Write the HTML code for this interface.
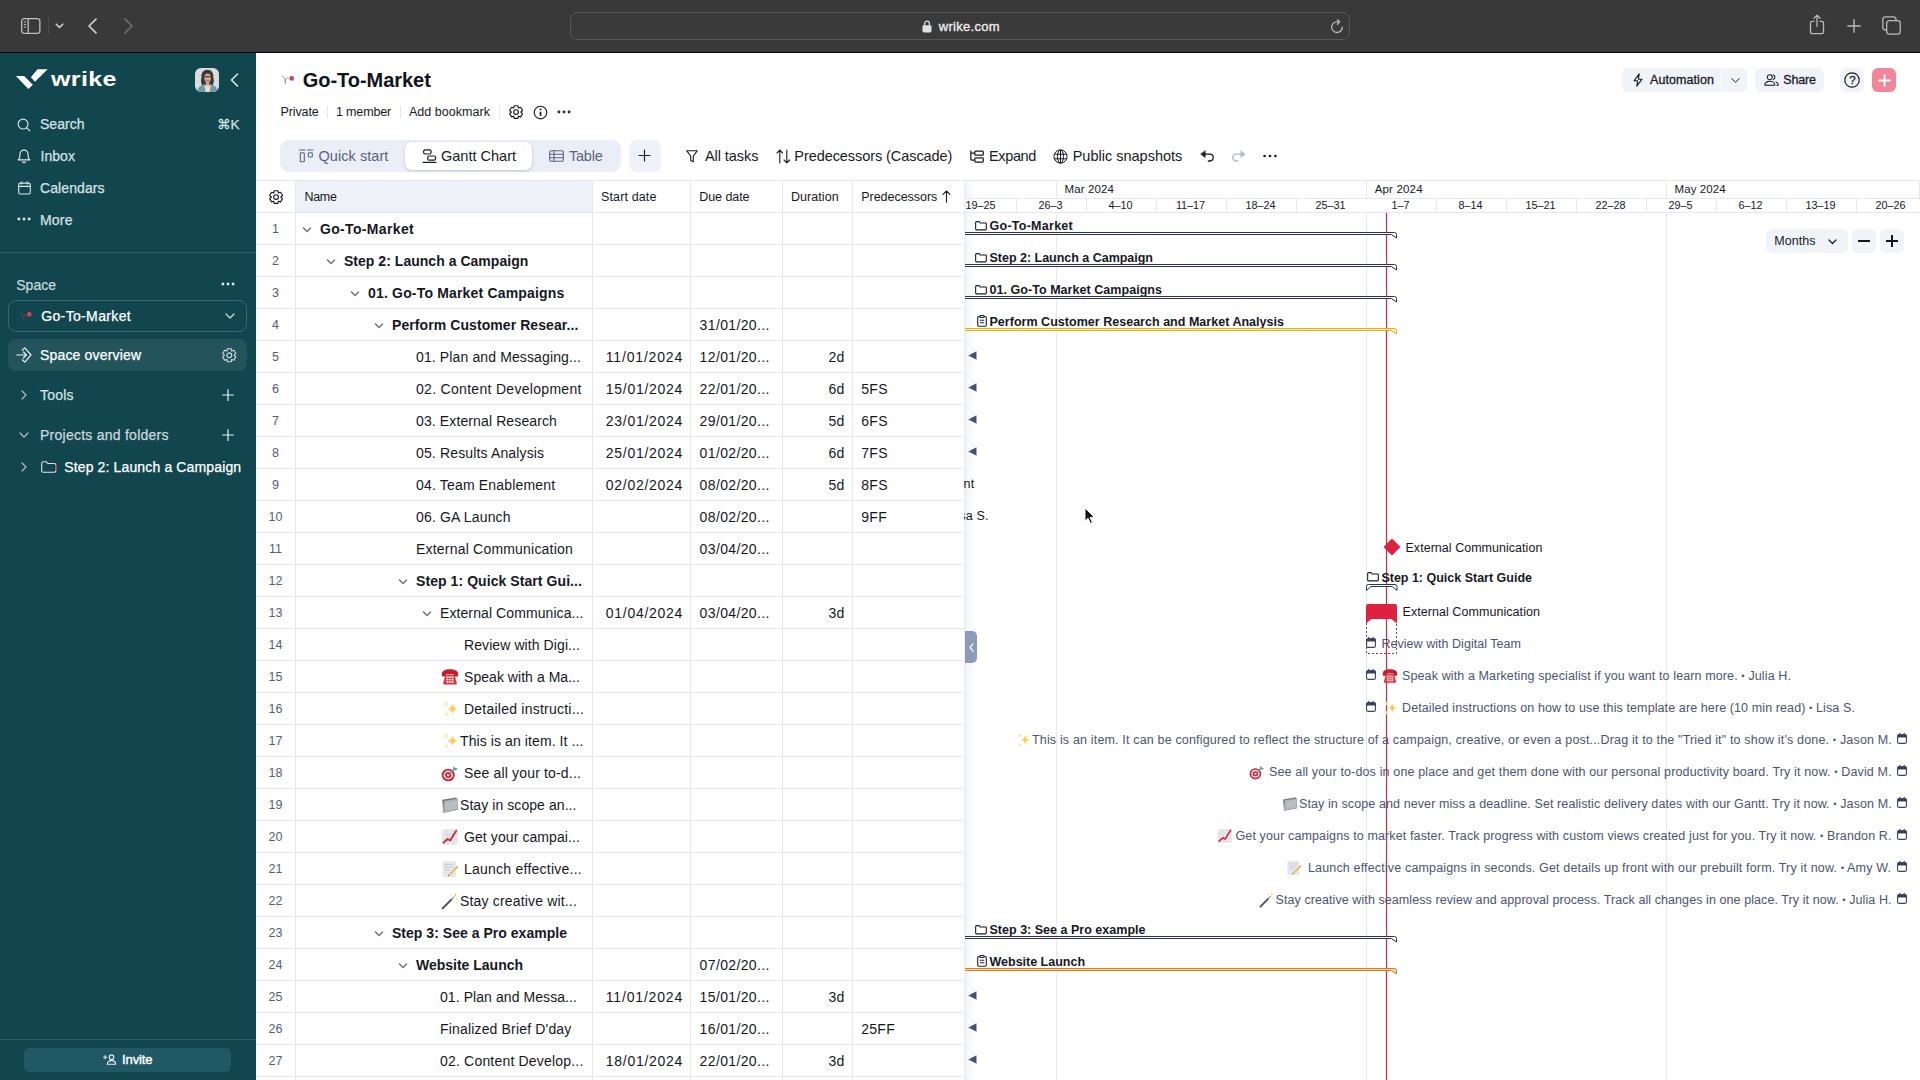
<!DOCTYPE html>
<html lang="en"><head><meta charset="utf-8"><title>Go-To-Market - Wrike</title>
<style>
*{box-sizing:border-box;margin:0;padding:0}
html,body{width:1920px;height:1080px;overflow:hidden;background:#fff}
body{font-family:"Liberation Sans",sans-serif;color:#14161c;position:relative;font-size:14px}
.a{position:absolute;white-space:nowrap}
svg{position:absolute;overflow:visible}
.t{position:absolute;white-space:nowrap;line-height:1}
#chrome{left:0;top:0;width:1920px;height:53px;background:#393939;border-bottom:1px solid #050505}
#side{left:0;top:53px;width:256px;height:1027px;background:#12464f}
.sn{color:#d6e1e2;font-size:14px;letter-spacing:.1px;-webkit-text-stroke:.25px currentColor}

.h13{font-size:12.5px;color:#181a24}
.tb{font-size:14.5px;color:#181a24}

.hl{position:absolute;height:1px;background:#e4e8f0}
.vl{position:absolute;width:1px;background:#e4e8f0}
.rn{position:absolute;width:40px;left:255.5px;text-align:center;font-size:12.5px;color:#555d7a;line-height:1}
.c{position:absolute;white-space:nowrap;line-height:1;font-size:14px;color:#16181f}
.hd{position:absolute;white-space:nowrap;line-height:1;font-size:12.5px;color:#16181f}

.g{position:absolute;white-space:nowrap;line-height:1;font-size:12.5px;color:#16181f}
.gm{color:#4c5473}
</style></head>
<body>
<div class="a" id="chrome">
<svg style="left:21px;top:17.5px" width="20" height="16" viewBox="0 0 20 16" fill="none" stroke="#bebebe" stroke-width="1.3"><rect x=".65" y=".65" width="18.2" height="14.7" rx="2.4"/><path d="M7.2.7v14.6"/><path d="M2.8 4h2.4M2.8 6.5h2.4M2.8 9h2.4" stroke-width="1"/></svg>
<div class="a" style="left:48px;top:17px;width:1px;height:18px;background:#4c4c4c"></div>
<svg style="left:55px;top:23px" width="9" height="6" viewBox="0 0 9 6" fill="none" stroke="#d0d0d0" stroke-width="1.6" stroke-linecap="round" stroke-linejoin="round"><path d="M1.2 1.2 4.5 4.4 7.8 1.2"/></svg>
<svg style="left:87px;top:17.5px" width="11" height="16" viewBox="0 0 11 16" fill="none" stroke="#cdcdcd" stroke-width="1.7" stroke-linecap="round" stroke-linejoin="round"><path d="M9 1.2 2 8l7 6.8"/></svg>
<svg style="left:123px;top:17.5px" width="11" height="16" viewBox="0 0 11 16" fill="none" stroke="#6e6e6e" stroke-width="1.7" stroke-linecap="round" stroke-linejoin="round"><path d="M2 1.2 9 8l-7 6.8"/></svg>
<div class="a" style="left:570px;top:12px;width:780px;height:28px;border:1px solid #575757;border-radius:7px;background:#3a3a3a"></div>
<svg style="left:922px;top:20px" width="10" height="13" viewBox="0 0 10 13"><rect x=".5" y="5.2" width="9" height="7.3" rx="1.4" fill="#e0e0e0"/><path d="M2.6 5.6V3.6a2.4 2.4 0 0 1 4.8 0v2" fill="none" stroke="#e0e0e0" stroke-width="1.3"/></svg>
<div class="t" style="left:938.7px;top:20px;font-size:13px;color:#ececec;-webkit-text-stroke:.35px #ececec;letter-spacing:.31px">wrike.com</div>
<svg style="left:1330px;top:18px" width="14" height="16" viewBox="0 0 14 16" fill="none" stroke="#b9b9b9" stroke-width="1.3" stroke-linecap="round" stroke-linejoin="round"><path d="M12.2 9.2A5.3 5.3 0 1 1 7 3.9h2.2"/><path d="M7.4 1.6 9.7 3.9 7.4 6.2"/></svg>
<svg style="left:1809px;top:14px" width="16" height="21" viewBox="0 0 16 21" fill="none" stroke="#b9b9b9" stroke-width="1.3" stroke-linecap="round" stroke-linejoin="round"><path d="M5 7.3H3.2A1.7 1.7 0 0 0 1.5 9v9a1.7 1.7 0 0 0 1.7 1.7h9.6A1.7 1.7 0 0 0 14.5 18V9a1.7 1.7 0 0 0-1.7-1.7H11"/><path d="M8 12.5V1.3M4.9 4.2 8 1.2l3.1 3"/></svg>
<svg style="left:1847px;top:19px" width="14" height="14" viewBox="0 0 14 14" fill="none" stroke="#b9b9b9" stroke-width="1.4" stroke-linecap="round"><path d="M7 .8v12.4M.8 7h12.4"/></svg>
<svg style="left:1882px;top:16px" width="19" height="19" viewBox="0 0 19 19" fill="none" stroke="#b9b9b9" stroke-width="1.3"><rect x="4.7" y="4.7" width="13.5" height="13.5" rx="2.6" fill="#393939"/><path d="M4.5 14H3.4A2.6 2.6 0 0 1 .8 11.4V3.4A2.6 2.6 0 0 1 3.4.8h8A2.6 2.6 0 0 1 14 3.4v1.1"/></svg>
</div>
<div class="a" id="side">
<svg style="left:0;top:0" width="256" height="60" viewBox="0 53 256 60" fill="#fff"><path d="M15.9 75.9H24.1L32.8 84.7 28.4 89.1z"/><path d="M37.5 69.3H47.6L35 81.7 30.9 77.3z"/></svg>
<div class="t" style="left:51px;top:15.1px;font-size:21px;font-weight:bold;color:#fff;letter-spacing:.3px;transform-origin:0 50%;transform:scaleX(1.19)">wrike</div>
<svg style="left:195px;top:15px" width="24" height="24" viewBox="0 0 24 24"><defs><clipPath id="av"><rect width="24" height="24" rx="6"/></clipPath></defs><g clip-path="url(#av)"><rect width="24" height="24" fill="#dcdde1"/><path d="M0 7h24M0 13h24M7 0v24M16 0v24" stroke="#cfd1d6" stroke-width=".6"/><path d="M6.5 9.5C6 4.5 9 1.8 12.5 1.8S18.8 4.5 18.3 9.5c.9 2.3.6 5.3-.5 7.5H7c-1.1-2.2-1.4-5.2-.5-7.5z" fill="#3b3937"/><ellipse cx="12.6" cy="9.8" rx="3.3" ry="4.3" fill="#d9a892"/><path d="M9.4 8.8h6.4" stroke="#2d2b2b" stroke-width="1"/><path d="M11.3 12.3q1.3.9 2.6 0" stroke="#a84a50" stroke-width=".8" fill="none"/><path d="M10.8 13.5h3.6v4h-3.6z" fill="#d2a08a"/><path d="M2 24c.3-4.5 3.5-7 7.3-7.5l3.3 2.8 3.3-2.8C19.7 17 22.4 19.5 22.7 24z" fill="#6f9da3"/><path d="M9.3 16.5l3.3 2.8 3.3-2.8-1.3 7.5h-4z" fill="#e9dfd2"/></g></svg>
<svg style="left:230px;top:20px" width="9" height="14" viewBox="0 0 9 14" fill="none" stroke="#e6eeee" stroke-width="1.5" stroke-linecap="round" stroke-linejoin="round"><path d="M7.5 1 1.5 7l6 6"/></svg>
<svg style="left:16.5px;top:64.5px" width="14" height="14" viewBox="0 0 15 15" fill="none" stroke="#dbe6e7" stroke-width="1.2" stroke-linecap="round"><circle cx="6.5" cy="6.5" r="5.3"/><path d="M10.5 10.5 13.8 13.8"/></svg>
<div class="t sn" style="left:40px;top:64px;;letter-spacing:0.024px">Search</div>
<div class="t sn" style="left:217px;top:65px;font-size:13.5px;font-family:'Liberation Sans','DejaVu Sans',sans-serif">⌘K</div>
<svg style="left:17px;top:95px" width="14" height="16" viewBox="0 0 14 16" fill="none" stroke="#dbe6e7" stroke-width="1.2" stroke-linecap="round" stroke-linejoin="round"><path d="M1.2 11.8c1.3-1 1.7-2.3 1.7-4.1V6.2a4.1 4.1 0 0 1 8.2 0v1.5c0 1.8.4 3.1 1.7 4.1z"/><path d="M5.6 13.8a1.5 1.5 0 0 0 2.8 0"/></svg>
<div class="t sn" style="left:40.5px;top:96px;;letter-spacing:0.05px">Inbox</div>
<svg style="left:17.5px;top:127.5px" width="13" height="14" viewBox="0 0 14 15" fill="none" stroke="#dbe6e7" stroke-width="1.2" stroke-linecap="round"><rect x=".8" y="2.3" width="12.4" height="11.7" rx="1.6"/><path d="M.8 5.8h12.4M4 .7v2.6M10 .7v2.6"/></svg>
<div class="t sn" style="left:40px;top:128px;;letter-spacing:0.099px">Calendars</div>
<svg style="left:17px;top:164px" width="14" height="4" viewBox="0 0 14 4" fill="#dbe6e7"><circle cx="1.9" cy="2" r="1.45"/><circle cx="7" cy="2" r="1.45"/><circle cx="12.1" cy="2" r="1.45"/></svg>
<div class="t sn" style="left:40px;top:160px;;letter-spacing:0.201px">More</div>
<div class="a" style="left:0;top:199px;width:256px;height:1px;background:#2f5d64"></div>
<div class="t sn" style="left:16.25px;top:225px;color:#c9d8da;letter-spacing:0.011px">Space</div>
<svg style="left:221px;top:229px" width="14" height="4" viewBox="0 0 14 4" fill="#dbe6e7"><circle cx="1.9" cy="2" r="1.45"/><circle cx="7" cy="2" r="1.45"/><circle cx="12.1" cy="2" r="1.45"/></svg>
<div class="a" style="left:8px;top:247px;width:239px;height:32px;border:1px solid #3b6870;border-radius:8px"></div>
<svg style="left:20px;top:258px" width="13" height="10" viewBox="0 0 13 10" fill="none"><path d="M1 2.3 3.7 5.6v3.2M3.7 5.6 6.3 3.4" stroke="#7d3140" stroke-width="1.1" stroke-linecap="round"/><circle cx="9.3" cy="3.2" r="2.2" fill="#d8415a"/></svg>
<div class="t sn" style="left:41.25px;top:256px;color:#fff;letter-spacing:0.348px">Go-To-Market</div>
<svg style="left:225px;top:260px" width="10" height="6" viewBox="0 0 10 6" fill="none" stroke="#cfdcdd" stroke-width="1.2" stroke-linecap="round" stroke-linejoin="round"><path d="M1 1 5 5 9 1"/></svg>
<div class="a" style="left:8px;top:286px;width:239px;height:32px;border-radius:8px;background:#23545c"></div>
<svg style="left:16px;top:294px" width="16" height="16" viewBox="0 0 16 16" fill="none" stroke="#e5eeee" stroke-width="1.2" stroke-linecap="round" stroke-linejoin="round"><path d="M6.2 3.2 8.8.9 15 8l-6.2 7.1-2.6-2.3"/><path d="M.8 8h9.4M7.4 5 10.4 8l-3 3"/></svg>
<div class="t sn" style="left:40px;top:295px;color:#fff;letter-spacing:0.173px">Space overview</div>
<svg style="left:221.75px;top:295px" width="14.5" height="14.5" viewBox="0 0 24 24" fill="none" stroke="#cfdcdd" stroke-width="1.9" stroke-linejoin="round"><path d="M8.12 4.89 L8.8 1.27 L15.2 1.27 L15.88 4.89 L16.21 5.08 L19.69 3.86 L22.9 9.41 L20.1 11.81 L20.1 12.19 L22.9 14.59 L19.69 20.14 L16.21 18.92 L15.88 19.11 L15.2 22.73 L8.8 22.73 L8.12 19.11 L7.79 18.92 L4.31 20.14 L1.1 14.59 L3.9 12.19 L3.9 11.81 L1.1 9.41 L4.31 3.86 L7.79 5.08Z"/><circle cx="12" cy="12" r="4"/></svg>
<svg style="left:21px;top:337px" width="6" height="10" viewBox="0 0 6 10" fill="none" stroke="#a9c0c3" stroke-width="1.2" stroke-linecap="round" stroke-linejoin="round"><path d="M1 1l4 4-4 4"/></svg>
<div class="t sn" style="left:40px;top:335px;;letter-spacing:0.213px">Tools</div>
<svg style="left:222px;top:336px" width="12" height="12" viewBox="0 0 12 12" fill="none" stroke="#e5eeee" stroke-width="1.2" stroke-linecap="round"><path d="M6 .6v10.8M.6 6h10.8"/></svg>
<svg style="left:19px;top:379px" width="10" height="6" viewBox="0 0 10 6" fill="none" stroke="#a9c0c3" stroke-width="1.2" stroke-linecap="round" stroke-linejoin="round"><path d="M1 1 5 5 9 1"/></svg>
<div class="t sn" style="left:40px;top:375px;color:#c9d8da;letter-spacing:0.251px">Projects and folders</div>
<svg style="left:222px;top:376px" width="12" height="12" viewBox="0 0 12 12" fill="none" stroke="#e5eeee" stroke-width="1.2" stroke-linecap="round"><path d="M6 .6v10.8M.6 6h10.8"/></svg>
<svg style="left:21px;top:409px" width="6" height="10" viewBox="0 0 6 10" fill="none" stroke="#a9c0c3" stroke-width="1.2" stroke-linecap="round" stroke-linejoin="round"><path d="M1 1l4 4-4 4"/></svg>
<svg style="left:41px;top:408px" width="16" height="12" viewBox="0 0 16 12" fill="none"><path d="M.7 2.2A1.4 1.4 0 0 1 2.1.8h3.2l1.5 1.7h6.6a1.4 1.4 0 0 1 1.4 1.4v5.9a1.4 1.4 0 0 1-1.4 1.4H2.1A1.4 1.4 0 0 1 .7 9.8z" stroke="#dbe6e7" stroke-width="1.1"/><path d="M14.9 4v6" stroke="#c0394d" stroke-width="1.3"/></svg>
<div class="t sn" style="left:64.25px;top:407px;color:#fff;letter-spacing:0.137px">Step 2: Launch a Campaign</div>
<div class="a" style="left:0;top:986px;width:256px;height:1px;background:#2f5d64"></div>
<div class="a" style="left:24px;top:995px;width:207px;height:24px;border-radius:6px;background:#215866"></div>
<svg style="left:103px;top:1001px" width="14" height="11" viewBox="0 0 14 11" fill="none" stroke="#e5eeee" stroke-width="1.1" stroke-linecap="round"><circle cx="8.5" cy="3.2" r="2.3"/><path d="M4.3 10.3c0-2.4 1.7-3.7 4.2-3.7s4.2 1.3 4.2 3.7z" stroke-linejoin="round"/><path d="M2.1 1.6v3.2M.5 3.2h3.2"/></svg>
<div class="t sn" style="left:122px;top:1000.3px;color:#fff;font-size:13px;-webkit-text-stroke:.4px #fff;letter-spacing:-0.095px">Invite</div>
</div>
<svg style="left:281px;top:74px" width="16" height="12" viewBox="0 0 16 12" fill="none"><path d="M1.6 2.4c1.4.6 2.3 1.9 2.6 3.8l.2 3.5M4.2 6.2C5 5 5.9 4.2 7.2 3.8" stroke="#85767c" stroke-width=".9" stroke-linecap="round"/><circle cx="10.7" cy="4.4" r="2.3" fill="#ae4c66"/></svg>
<div class="t " style="left:302.7px;top:70px;font-size:20px;font-weight:bold;color:#12141c;letter-spacing:-0.035px">Go-To-Market</div>
<div class="t h13" style="left:280.5px;top:106px;;letter-spacing:-0.115px">Private</div>
<div class="a" style="left:327px;top:106px;width:1px;height:12px;background:#e4e7ef"></div>
<div class="t h13" style="left:336px;top:106px;;letter-spacing:-0.159px">1 member</div>
<div class="a" style="left:400px;top:106px;width:1px;height:12px;background:#e4e7ef"></div>
<div class="t h13" style="left:409px;top:106px;;letter-spacing:0.034px">Add bookmark</div>
<div class="a" style="left:499px;top:106px;width:1px;height:12px;background:#e4e7ef"></div>
<svg style="left:508.9px;top:104.9px" width="14.2" height="14.2" viewBox="0 0 24 24" fill="none" stroke="#181a24" stroke-width="1.94" stroke-linejoin="round"><path d="M8.12 4.89 L8.8 1.27 L15.2 1.27 L15.88 4.89 L16.21 5.08 L19.69 3.86 L22.9 9.41 L20.1 11.81 L20.1 12.19 L22.9 14.59 L19.69 20.14 L16.21 18.92 L15.88 19.11 L15.2 22.73 L8.8 22.73 L8.12 19.11 L7.79 18.92 L4.31 20.14 L1.1 14.59 L3.9 12.19 L3.9 11.81 L1.1 9.41 L4.31 3.86 L7.79 5.08Z"/><circle cx="12" cy="12" r="4"/></svg>
<svg style="left:532.7px;top:104.5px" width="15" height="15" viewBox="0 0 15 15" fill="none" stroke="#181a24" stroke-width="1.15"><circle cx="7.5" cy="7.5" r="6.3"/><path d="M7.5 6.7v4.2" stroke-width="1.7"/><rect x="6.65" y="3.5" width="1.7" height="1.7" fill="#181a24" stroke="none"/></svg>
<svg style="left:557px;top:110px" width="14" height="4" viewBox="0 0 14 4" fill="#2a2d3a"><circle cx="1.9" cy="2" r="1.45"/><circle cx="7" cy="2" r="1.45"/><circle cx="12.1" cy="2" r="1.45"/></svg>
<div class="a" style="left:280px;top:140px;width:341px;height:32px;border-radius:9px;background:#eaeef6"></div>
<div class="a" style="left:405px;top:142px;width:127px;height:28px;border-radius:7px;background:#fff;box-shadow:0 1px 3px rgba(60,70,110,.25)"></div>
<svg style="left:299px;top:149px" width="15" height="14" viewBox="0 0 15 14" fill="none" stroke="#5a6280" stroke-width="1.1"><path d="M.6 1h5.4M8.6 1h5.4" stroke-linecap="round"/><rect x="1.3" y="3.8" width="4" height="9" rx=".8"/><rect x="9.3" y="3.8" width="4" height="4.2" rx=".8"/></svg>
<div class="t tb" style="left:318.5px;top:149px;color:#5a6280;letter-spacing:0.055px">Quick start</div>
<svg style="left:422px;top:149px" width="15" height="14" viewBox="0 0 15 14" fill="none" stroke="#181a24" stroke-width="1.2"><rect x="1.6" y=".8" width="7.5" height="4.2" rx="1.8"/><rect x="5.6" y="7" width="8" height="4.2" rx="1.8"/><path d="M1 13.3h13" stroke-linecap="round"/></svg>
<div class="t tb" style="left:441px;top:149px;;letter-spacing:0.005px">Gantt Chart</div>
<svg style="left:549px;top:150px" width="15" height="12" viewBox="0 0 15 12" fill="none" stroke="#5a6280" stroke-width="1.1"><rect x=".7" y=".7" width="13.6" height="10.6" rx="1.4"/><path d="M.7 4.3h13.6M.7 7.8h13.6M5 .7v10.6"/></svg>
<div class="t tb" style="left:569px;top:149px;color:#5a6280;letter-spacing:-0.233px">Table</div>
<div class="a" style="left:629px;top:140px;width:32px;height:32px;border-radius:8px;background:#eef1f7"></div>
<svg style="left:638px;top:148.8px" width="13" height="13" viewBox="0 0 13 13" fill="none" stroke="#181a24" stroke-width="1.15" stroke-linecap="round"><path d="M6.5 1v11M1 6.5h11"/></svg>
<svg style="left:686px;top:150px" width="12" height="13" viewBox="0 0 12 13" fill="none" stroke="#181a24" stroke-width="1.1" stroke-linejoin="round"><path d="M.8.8h10.4L7.3 6v5.8L4.7 10.5V6z"/></svg>
<div class="t tb" style="left:705px;top:149px;;letter-spacing:-0.076px">All tasks</div>
<svg style="left:776px;top:149px" width="15" height="15" viewBox="0 0 15 15" fill="none" stroke="#181a24" stroke-width="1.1" stroke-linecap="round" stroke-linejoin="round"><path d="M3.8 14V1.2M1 4 3.8 1.2 6.6 4M10.8 1v12.8M8 11l2.8 2.8L13.6 11"/></svg>
<div class="t tb" style="left:794.3px;top:149px;;letter-spacing:-0.071px">Predecessors (Cascade)</div>
<svg style="left:970px;top:150px" width="14" height="13" viewBox="0 0 14 13" fill="none" stroke="#181a24" stroke-width="1.25" stroke-linejoin="round"><path d="M.8.6v8.4a1 1 0 0 0 1 1h3M.8 3.2h4"/><rect x="4.8" y="1" width="8.5" height="4.2" rx=".9"/><rect x="4.8" y="7.8" width="8.5" height="4.2" rx=".9"/></svg>
<div class="t tb" style="left:989px;top:149px;;letter-spacing:-0.363px">Expand</div>
<svg style="left:1053px;top:149px" width="15" height="15" viewBox="0 0 15 15" fill="none" stroke="#181a24" stroke-width="1"><circle cx="7.5" cy="7.5" r="6.6"/><ellipse cx="7.5" cy="7.5" rx="3" ry="6.6"/><path d="M7.5.9v13.2M1.3 5.2h12.4M1.3 9.8h12.4"/></svg>
<div class="t tb" style="left:1072.7px;top:149px;;letter-spacing:-0.001px">Public snapshots</div>
<svg style="left:1200px;top:150px" width="15" height="12" viewBox="0 0 15 12" fill="none" stroke="#181a24" stroke-width="1.3" stroke-linecap="round" stroke-linejoin="round"><path d="M5.2 1v6.4L.9 4.2z" fill="#181a24" stroke-width=".6"/><path d="M5 4.2h4.8a3.4 3.4 0 0 1 0 6.8H8.3"/></svg>
<svg style="left:1231px;top:150px" width="15" height="12" viewBox="0 0 15 12" fill="none" stroke="#b4b9c6" stroke-width="1.3" stroke-linecap="round" stroke-linejoin="round"><path d="M9.8 1v6.4l4.3-3.2z" fill="#b4b9c6" stroke-width=".6"/><path d="M10 4.2H5.2a3.4 3.4 0 0 0 0 6.8h1.5"/></svg>
<svg style="left:1263px;top:154px" width="14" height="4" viewBox="0 0 14 4" fill="#181a24"><circle cx="1.6" cy="2" r="1.35"/><circle cx="7" cy="2" r="1.35"/><circle cx="12.4" cy="2" r="1.35"/></svg>
<div class="a" style="left:1622px;top:68px;width:99px;height:24px;border-radius:6px 0 0 6px;background:#f0f3f8"></div>
<div class="a" style="left:1722px;top:68px;width:25px;height:24px;border-radius:0 6px 6px 0;background:#f0f3f8"></div>
<svg style="left:1633px;top:73px" width="10" height="14" viewBox="0 0 10 14" fill="none" stroke="#181a24" stroke-width="1.1" stroke-linejoin="round"><path d="M6.2.8 1 7.8h3.6L3.8 13.2 9 6.2H5.4z"/></svg>
<div class="t " style="left:1650px;top:74px;font-size:12.5px;color:#181a24;-webkit-text-stroke:.3px #181a24;letter-spacing:0.077px">Automation</div>
<svg style="left:1730.5px;top:78px" width="9" height="5" viewBox="0 0 9 5" fill="none" stroke="#181a24" stroke-width="1" stroke-linecap="round" stroke-linejoin="round"><path d="M.8.7 4.5 4.2 8.2.7"/></svg>
<div class="a" style="left:1755px;top:68px;width:69px;height:24px;border-radius:6px;background:#f0f3f8"></div>
<svg style="left:1763.5px;top:74px" width="15" height="12" viewBox="0 0 15 12" fill="none" stroke="#181a24" stroke-width="1.05" stroke-linejoin="round"><circle cx="5.8" cy="3.2" r="2.5"/><path d="M.8 11.3c0-2.6 2-4 5-4s5 1.4 5 4z"/><path d="M9.3.900a2.5 2.5 0 0 1 0 4.7M12 7.9c1.5.6 2.3 1.7 2.3 3.4h-1.5" stroke-linecap="round"/></svg>
<div class="t " style="left:1783.3px;top:74px;font-size:12.5px;color:#181a24;-webkit-text-stroke:.3px #181a24;letter-spacing:-0.191px">Share</div>
<div class="a" style="left:1840px;top:68px;width:24px;height:24px;border-radius:6px;background:#f0f3f8"></div>
<svg style="left:1844px;top:72px" width="16" height="16" viewBox="0 0 16 16" fill="none" stroke="#181a24" stroke-width="1.2"><circle cx="8" cy="8" r="7.2"/></svg>
<div class="t " style="left:1849.2px;top:74.5px;font-size:11.5px;color:#14161c;-webkit-text-stroke:.3px #14161c">?</div>
<div class="a" style="left:1872px;top:68px;width:24px;height:24px;border-radius:6px;background:#f1859a"></div>
<svg style="left:1877.5px;top:73.5px" width="13" height="13" viewBox="0 0 13 13" fill="none" stroke="#fff" stroke-width="2" stroke-linecap="round"><path d="M6.5 1.3v10.4M1.3 6.5h10.4"/></svg>
<div class="a" style="left:296px;top:181px;width:296px;height:31px;background:#eef1f7"></div>
<div class="hl" style="left:256px;top:180px;width:709px"></div>
<svg style="left:268.8px;top:189.5px" width="14.2" height="14.2" viewBox="0 0 24 24" fill="none" stroke="#181a24" stroke-width="1.94" stroke-linejoin="round"><path d="M8.12 4.89 L8.8 1.27 L15.2 1.27 L15.88 4.89 L16.21 5.08 L19.69 3.86 L22.9 9.41 L20.1 11.81 L20.1 12.19 L22.9 14.59 L19.69 20.14 L16.21 18.92 L15.88 19.11 L15.2 22.73 L8.8 22.73 L8.12 19.11 L7.79 18.92 L4.31 20.14 L1.1 14.59 L3.9 12.19 L3.9 11.81 L1.1 9.41 L4.31 3.86 L7.79 5.08Z"/><circle cx="12" cy="12" r="4"/></svg>
<div class="hd" style="left:304.5px;top:190.5px;letter-spacing:-0.336px">Name</div>
<div class="hd" style="left:601px;top:190.5px;letter-spacing:0.13px">Start date</div>
<div class="hd" style="left:699.2px;top:190.5px;letter-spacing:-0.054px">Due date</div>
<div class="hd" style="left:791px;top:190.5px;letter-spacing:0.057px">Duration</div>
<div class="hd" style="left:861.2px;top:190.5px;letter-spacing:-0.027px">Predecessors</div>
<svg style="left:942px;top:189.5px" width="9" height="13" viewBox="0 0 9 13" fill="none" stroke="#1c1f2b" stroke-width="1.1" stroke-linecap="round" stroke-linejoin="round"><path d="M4.5 12.2V1M1 4.3 4.5.8 8 4.3"/></svg>
<div class="hl" style="left:256px;top:212px;width:709px"></div>
<div class="hl" style="left:256px;top:244px;width:709px"></div>
<div class="hl" style="left:256px;top:276px;width:709px"></div>
<div class="hl" style="left:256px;top:308px;width:709px"></div>
<div class="hl" style="left:256px;top:340px;width:709px"></div>
<div class="hl" style="left:256px;top:372px;width:709px"></div>
<div class="hl" style="left:256px;top:404px;width:709px"></div>
<div class="hl" style="left:256px;top:436px;width:709px"></div>
<div class="hl" style="left:256px;top:468px;width:709px"></div>
<div class="hl" style="left:256px;top:500px;width:709px"></div>
<div class="hl" style="left:256px;top:532px;width:709px"></div>
<div class="hl" style="left:256px;top:564px;width:709px"></div>
<div class="hl" style="left:256px;top:596px;width:709px"></div>
<div class="hl" style="left:256px;top:628px;width:709px"></div>
<div class="hl" style="left:256px;top:660px;width:709px"></div>
<div class="hl" style="left:256px;top:692px;width:709px"></div>
<div class="hl" style="left:256px;top:724px;width:709px"></div>
<div class="hl" style="left:256px;top:756px;width:709px"></div>
<div class="hl" style="left:256px;top:788px;width:709px"></div>
<div class="hl" style="left:256px;top:820px;width:709px"></div>
<div class="hl" style="left:256px;top:852px;width:709px"></div>
<div class="hl" style="left:256px;top:884px;width:709px"></div>
<div class="hl" style="left:256px;top:916px;width:709px"></div>
<div class="hl" style="left:256px;top:948px;width:709px"></div>
<div class="hl" style="left:256px;top:980px;width:709px"></div>
<div class="hl" style="left:256px;top:1012px;width:709px"></div>
<div class="hl" style="left:256px;top:1044px;width:709px"></div>
<div class="hl" style="left:256px;top:1076px;width:709px"></div>
<div class="vl" style="left:295px;top:181px;height:899px"></div>
<div class="vl" style="left:592px;top:181px;height:899px"></div>
<div class="vl" style="left:690px;top:181px;height:899px"></div>
<div class="vl" style="left:782px;top:181px;height:899px"></div>
<div class="vl" style="left:852px;top:181px;height:899px"></div>
<div class="vl" style="left:964px;top:181px;height:899px"></div>
<div class="rn" style="top:222.5px">1</div>
<svg style="left:301.7px;top:226.8px" width="10" height="6" viewBox="0 0 10 6" fill="none" stroke="#565d76" stroke-width="1.15" stroke-linecap="round" stroke-linejoin="round"><path d="M1.4 1 5 4.6 8.6 1"/></svg>
<div class="c" style="left:320px;top:222px;letter-spacing:0.337px;font-weight:bold;">Go-To-Market</div>
<div class="rn" style="top:254.5px">2</div>
<svg style="left:325.7px;top:258.8px" width="10" height="6" viewBox="0 0 10 6" fill="none" stroke="#565d76" stroke-width="1.15" stroke-linecap="round" stroke-linejoin="round"><path d="M1.4 1 5 4.6 8.6 1"/></svg>
<div class="c" style="left:344px;top:254px;letter-spacing:0.029px;font-weight:bold;">Step 2: Launch a Campaign</div>
<div class="rn" style="top:286.5px">3</div>
<svg style="left:349.7px;top:290.8px" width="10" height="6" viewBox="0 0 10 6" fill="none" stroke="#565d76" stroke-width="1.15" stroke-linecap="round" stroke-linejoin="round"><path d="M1.4 1 5 4.6 8.6 1"/></svg>
<div class="c" style="left:368px;top:286px;letter-spacing:0.177px;font-weight:bold;">01. Go-To Market Campaigns</div>
<div class="rn" style="top:318.5px">4</div>
<svg style="left:373.7px;top:322.8px" width="10" height="6" viewBox="0 0 10 6" fill="none" stroke="#565d76" stroke-width="1.15" stroke-linecap="round" stroke-linejoin="round"><path d="M1.4 1 5 4.6 8.6 1"/></svg>
<div class="c" style="left:392px;top:318px;letter-spacing:0.081px;font-weight:bold;">Perform Customer Resear...</div>
<div class="c" style="left:699.6px;top:318px;letter-spacing:0.358px">31/01/20...</div>
<div class="rn" style="top:350.5px">5</div>
<div class="c" style="left:416px;top:350px;letter-spacing:0.125px;">01. Plan and Messaging...</div>
<div class="c" style="left:605.8px;top:350px;letter-spacing:0.817px">11/01/2024</div>
<div class="c" style="left:699.6px;top:350px;letter-spacing:0.358px">12/01/20...</div>
<div class="c" style="left:782px;width:62.5px;text-align:right;top:350px;letter-spacing:.2px">2d</div>
<div class="rn" style="top:382.5px">6</div>
<div class="c" style="left:416px;top:382px;letter-spacing:0.302px;">02. Content Development</div>
<div class="c" style="left:605.8px;top:382px;letter-spacing:0.713px">15/01/2024</div>
<div class="c" style="left:699.6px;top:382px;letter-spacing:0.358px">22/01/20...</div>
<div class="c" style="left:782px;width:62.5px;text-align:right;top:382px;letter-spacing:.2px">6d</div>
<div class="c" style="left:861.2px;top:382px;letter-spacing:.3px">5FS</div>
<div class="rn" style="top:414.5px">7</div>
<div class="c" style="left:416px;top:414px;letter-spacing:0.118px;">03. External Research</div>
<div class="c" style="left:605.8px;top:414px;letter-spacing:0.713px">23/01/2024</div>
<div class="c" style="left:699.6px;top:414px;letter-spacing:0.358px">29/01/20...</div>
<div class="c" style="left:782px;width:62.5px;text-align:right;top:414px;letter-spacing:.2px">5d</div>
<div class="c" style="left:861.2px;top:414px;letter-spacing:.3px">6FS</div>
<div class="rn" style="top:446.5px">8</div>
<div class="c" style="left:416px;top:446px;letter-spacing:0.147px;">05. Results Analysis</div>
<div class="c" style="left:605.8px;top:446px;letter-spacing:0.713px">25/01/2024</div>
<div class="c" style="left:699.6px;top:446px;letter-spacing:0.358px">01/02/20...</div>
<div class="c" style="left:782px;width:62.5px;text-align:right;top:446px;letter-spacing:.2px">6d</div>
<div class="c" style="left:861.2px;top:446px;letter-spacing:.3px">7FS</div>
<div class="rn" style="top:478.5px">9</div>
<div class="c" style="left:416px;top:478px;letter-spacing:0.174px;">04. Team Enablement</div>
<div class="c" style="left:605.8px;top:478px;letter-spacing:0.713px">02/02/2024</div>
<div class="c" style="left:699.6px;top:478px;letter-spacing:0.358px">08/02/20...</div>
<div class="c" style="left:782px;width:62.5px;text-align:right;top:478px;letter-spacing:.2px">5d</div>
<div class="c" style="left:861.2px;top:478px;letter-spacing:.3px">8FS</div>
<div class="rn" style="top:510.5px">10</div>
<div class="c" style="left:416px;top:510px;letter-spacing:0.162px;">06. GA Launch</div>
<div class="c" style="left:699.6px;top:510px;letter-spacing:0.358px">08/02/20...</div>
<div class="c" style="left:861.2px;top:510px;letter-spacing:.3px">9FF</div>
<div class="rn" style="top:542.5px">11</div>
<div class="c" style="left:416px;top:542px;letter-spacing:0.204px;">External Communication</div>
<div class="c" style="left:699.6px;top:542px;letter-spacing:0.358px">03/04/20...</div>
<div class="rn" style="top:574.5px">12</div>
<svg style="left:397.7px;top:578.8px" width="10" height="6" viewBox="0 0 10 6" fill="none" stroke="#565d76" stroke-width="1.15" stroke-linecap="round" stroke-linejoin="round"><path d="M1.4 1 5 4.6 8.6 1"/></svg>
<div class="c" style="left:416px;top:574px;letter-spacing:0.071px;font-weight:bold;">Step 1: Quick Start Gui...</div>
<div class="rn" style="top:606.5px">13</div>
<svg style="left:421.7px;top:610.8px" width="10" height="6" viewBox="0 0 10 6" fill="none" stroke="#565d76" stroke-width="1.15" stroke-linecap="round" stroke-linejoin="round"><path d="M1.4 1 5 4.6 8.6 1"/></svg>
<div class="c" style="left:440px;top:606px;letter-spacing:0.09px;">External Communica...</div>
<div class="c" style="left:605.8px;top:606px;letter-spacing:0.713px">01/04/2024</div>
<div class="c" style="left:699.6px;top:606px;letter-spacing:0.358px">03/04/20...</div>
<div class="c" style="left:782px;width:62.5px;text-align:right;top:606px;letter-spacing:.2px">3d</div>
<div class="rn" style="top:638.5px">14</div>
<div class="c" style="left:464px;top:638px;letter-spacing:0.086px;">Review with Digi...</div>
<div class="rn" style="top:670.5px">15</div>
<svg style="left:440.5px;top:667.5px" width="18" height="18" viewBox="0 0 18 18"><path d="M.8 6.2C.8 3 4.2 1.3 9 1.3s8.2 1.7 8.2 4.9v1.6c0 .5-.4.8-.9.8h-2.6c-.5 0-.8-.3-.8-.8V6.3H5.1v1.5c0 .5-.3.8-.8.8H1.7c-.5 0-.9-.3-.9-.8z" fill="#c41f2e"/><path d="M4.6 6.8h8.8l2.4 8.3c.2.8-.3 1.5-1.1 1.5H3.3c-.8 0-1.3-.7-1.1-1.5z" fill="#e2303c"/><rect x="5.4" y="8.3" width="7.2" height="6.6" rx=".8" fill="#f7dedb"/><path d="M7.8 8.3v6.6M10.2 8.3v6.6M5.4 10.5h7.2M5.4 12.7h7.2" stroke="#c93a44" stroke-width=".7"/></svg>
<div class="c" style="left:464px;top:670px;letter-spacing:0.046px;">Speak with a Ma...</div>
<div class="rn" style="top:702.5px">16</div>
<svg style="left:440.5px;top:699.5px" width="18" height="18" viewBox="0 0 18 18"><path d="M11.5 3c.5 3.6 1.8 5 5.5 5.7-3.7.7-5 2.1-5.5 5.7-.5-3.6-1.8-5-5.5-5.7C9.7 8 11 6.6 11.5 3z" fill="#f8cf4e"/><path d="M5.2 1.2c.3 1.8.9 2.5 2.7 2.8-1.8.3-2.4 1-2.7 2.8-.3-1.8-.9-2.5-2.7-2.8 1.8-.3 2.4-1 2.7-2.8zM5.5 11.5c.3 1.8.9 2.5 2.7 2.8-1.8.3-2.4 1-2.7 2.8-.3-1.8-.9-2.5-2.7-2.8 1.8-.3 2.4-1 2.7-2.8z" fill="#fbe59a"/></svg>
<div class="c" style="left:464px;top:702px;letter-spacing:0.231px;">Detailed instructi...</div>
<div class="rn" style="top:734.5px">17</div>
<svg style="left:440.5px;top:731.5px" width="18" height="18" viewBox="0 0 18 18"><path d="M11.5 3c.5 3.6 1.8 5 5.5 5.7-3.7.7-5 2.1-5.5 5.7-.5-3.6-1.8-5-5.5-5.7C9.7 8 11 6.6 11.5 3z" fill="#f8cf4e"/><path d="M5.2 1.2c.3 1.8.9 2.5 2.7 2.8-1.8.3-2.4 1-2.7 2.8-.3-1.8-.9-2.5-2.7-2.8 1.8-.3 2.4-1 2.7-2.8zM5.5 11.5c.3 1.8.9 2.5 2.7 2.8-1.8.3-2.4 1-2.7 2.8-.3-1.8-.9-2.5-2.7-2.8 1.8-.3 2.4-1 2.7-2.8z" fill="#fbe59a"/></svg>
<div class="c" style="left:460px;top:734px;letter-spacing:0.093px;">This is an item. It ...</div>
<div class="rn" style="top:766.5px">18</div>
<svg style="left:440.5px;top:763.5px" width="18" height="18" viewBox="0 0 18 18"><ellipse cx="7.2" cy="11" rx="6.6" ry="6.3" fill="#c8283a"/><ellipse cx="7.2" cy="11" rx="4.7" ry="4.4" fill="#f3e3e3"/><ellipse cx="7.2" cy="11" rx="3.1" ry="2.9" fill="#c8283a"/><ellipse cx="7.2" cy="11" rx="1.3" ry="1.2" fill="#f3e3e3"/><path d="M7.4 10.8 14 4.2" stroke="#7b8791" stroke-width="1.2"/><path d="M13 2.2l1.2 1.9 2.7.5-2.1 2-2.3-.4-.4-2.2z" fill="#4aa3b8"/></svg>
<div class="c" style="left:464px;top:766px;letter-spacing:0.169px;">See all your to-d...</div>
<div class="rn" style="top:798.5px">19</div>
<svg style="left:440.5px;top:795.5px" width="18" height="18" viewBox="0 0 18 18"><path d="M1.2 3.8 15.6 1.5l1.2 12.3L2.3 16.7z" fill="#6f757f"/><path d="M2.9 4.9 16.9 2.6l-.1 11.2L2.3 16.7z" fill="#a9aeb6"/><path d="M4.5 6 15.8 4.2l-.1 8.6L4 15z" fill="#b9bdc4"/></svg>
<div class="c" style="left:460px;top:798px;letter-spacing:0.07px;">Stay in scope an...</div>
<div class="rn" style="top:830.5px">20</div>
<svg style="left:440.5px;top:827.5px" width="18" height="18" viewBox="0 0 18 18"><rect x="1.2" y="1.2" width="15.6" height="15.6" rx="1.2" fill="#e6e8ee"/><path d="M1.2 6.4h15.6M1.2 11.6h15.6M6.4 1.2v15.6M11.6 1.2v15.6" stroke="#d2d6de" stroke-width=".7"/><path d="M2.4 14.8 6.6 11l2.6 1.5L15.2 2.8" fill="none" stroke="#cf2f3f" stroke-width="1.9" stroke-linejoin="round" stroke-linecap="round"/></svg>
<div class="c" style="left:464px;top:830px;letter-spacing:0.09px;">Get your campai...</div>
<div class="rn" style="top:862.5px">21</div>
<svg style="left:440.5px;top:859.5px" width="18" height="18" viewBox="0 0 18 18"><rect x="1.5" y="1.2" width="13.5" height="15.6" rx="1" fill="#e6e8ee"/><path d="M3.6 4.4h8.6M3.6 7.2h8.6M3.6 10h5.4" stroke="#c0c5cf" stroke-width=".9"/><path d="M15.4 6.6 8.6 13.4l-2 3 3.2-1.8 6.8-6.8z" fill="#f0b73a"/><path d="M15.4 6.6l1.2 1.2.6-.8-1.1-1.1z" fill="#e2656f"/><path d="M6.6 16.4l1.1-1.7.7.7z" fill="#3a3a3a"/></svg>
<div class="c" style="left:464px;top:862px;letter-spacing:0.243px;">Launch effective...</div>
<div class="rn" style="top:894.5px">22</div>
<svg style="left:440.5px;top:891.5px" width="18" height="18" viewBox="0 0 18 18"><path d="M1.6 16.4 12.4 5.6" stroke="#474c58" stroke-width="2" stroke-linecap="round"/><path d="M11.2 6.8 12.4 5.6" stroke="#cfd2d9" stroke-width="2" stroke-linecap="round"/><path d="M14.4.8l.5 1.6 1.6.5-1.6.5-.5 1.6-.5-1.6-1.6-.5 1.6-.5zM10.4 1.3l.3.9.9.3-.9.3-.3.9-.3-.9-.9-.3.9-.3zM16 6.2l.3.9.9.3-.9.3-.3.9-.3-.9-.9-.3.9-.3z" fill="#f0c552"/></svg>
<div class="c" style="left:460px;top:894px;letter-spacing:0.17px;">Stay creative wit...</div>
<div class="rn" style="top:926.5px">23</div>
<svg style="left:373.7px;top:930.8px" width="10" height="6" viewBox="0 0 10 6" fill="none" stroke="#565d76" stroke-width="1.15" stroke-linecap="round" stroke-linejoin="round"><path d="M1.4 1 5 4.6 8.6 1"/></svg>
<div class="c" style="left:392px;top:926px;letter-spacing:0.028px;font-weight:bold;">Step 3: See a Pro example</div>
<div class="rn" style="top:958.5px">24</div>
<svg style="left:397.7px;top:962.8px" width="10" height="6" viewBox="0 0 10 6" fill="none" stroke="#565d76" stroke-width="1.15" stroke-linecap="round" stroke-linejoin="round"><path d="M1.4 1 5 4.6 8.6 1"/></svg>
<div class="c" style="left:416px;top:958px;letter-spacing:-0.007px;font-weight:bold;">Website Launch</div>
<div class="c" style="left:699.6px;top:958px;letter-spacing:0.358px">07/02/20...</div>
<div class="rn" style="top:990.5px">25</div>
<div class="c" style="left:440px;top:990px;letter-spacing:0.076px;">01. Plan and Messa...</div>
<div class="c" style="left:605.8px;top:990px;letter-spacing:0.817px">11/01/2024</div>
<div class="c" style="left:699.6px;top:990px;letter-spacing:0.358px">15/01/20...</div>
<div class="c" style="left:782px;width:62.5px;text-align:right;top:990px;letter-spacing:.2px">3d</div>
<div class="rn" style="top:1022.5px">26</div>
<div class="c" style="left:440px;top:1022px;letter-spacing:0.169px;">Finalized Brief D'day</div>
<div class="c" style="left:699.6px;top:1022px;letter-spacing:0.358px">16/01/20...</div>
<div class="c" style="left:861.2px;top:1022px;letter-spacing:.3px">25FF</div>
<div class="rn" style="top:1054.5px">27</div>
<div class="c" style="left:440px;top:1054px;letter-spacing:0.19px;">02. Content Develop...</div>
<div class="c" style="left:605.8px;top:1054px;letter-spacing:0.713px">18/01/2024</div>
<div class="c" style="left:699.6px;top:1054px;letter-spacing:0.358px">22/01/20...</div>
<div class="c" style="left:782px;width:62.5px;text-align:right;top:1054px;letter-spacing:.2px">3d</div>
<div class="a" style="left:964px;top:181px;width:13px;height:899px;background:linear-gradient(90deg,rgba(234,236,242,1),rgba(245,246,250,.8) 30%,rgba(255,255,255,0))"></div>
<div class="hl" style="left:965px;top:180px;width:955px"></div>
<div class="hl" style="left:965px;top:198px;width:955px"></div>
<div class="hl" style="left:965px;top:212px;width:955px"></div>
<div class="vl" style="left:1056px;top:181px;height:17px;background:#e6e9ef"></div>
<div class="vl" style="left:1056px;top:213px;height:867px;background:#e6e9ef"></div>
<div class="vl" style="left:1366px;top:181px;height:17px;background:#e6e9ef"></div>
<div class="vl" style="left:1366px;top:213px;height:867px;background:#e6e9ef"></div>
<div class="vl" style="left:1666px;top:181px;height:17px;background:#e6e9ef"></div>
<div class="vl" style="left:1666px;top:213px;height:867px;background:#e6e9ef"></div>
<div class="vl" style="left:1919px;top:181px;height:17px"></div>
<div class="vl" style="left:1016px;top:199px;height:13px"></div>
<div class="vl" style="left:1086px;top:199px;height:13px"></div>
<div class="vl" style="left:1156px;top:199px;height:13px"></div>
<div class="vl" style="left:1226px;top:199px;height:13px"></div>
<div class="vl" style="left:1296px;top:199px;height:13px"></div>
<div class="vl" style="left:1436px;top:199px;height:13px"></div>
<div class="vl" style="left:1506px;top:199px;height:13px"></div>
<div class="vl" style="left:1576px;top:199px;height:13px"></div>
<div class="vl" style="left:1646px;top:199px;height:13px"></div>
<div class="vl" style="left:1716px;top:199px;height:13px"></div>
<div class="vl" style="left:1786px;top:199px;height:13px"></div>
<div class="vl" style="left:1856px;top:199px;height:13px"></div>
<div class="g" style="left:1064.5px;top:183.5px;font-size:11.5px;letter-spacing:0.115px">Mar 2024</div>
<div class="g" style="left:1374.7px;top:183.5px;font-size:11.5px;letter-spacing:0.166px">Apr 2024</div>
<div class="g" style="left:1674.5px;top:183.5px;font-size:11.5px;letter-spacing:0.087px">May 2024</div>
<div class="g" style="left:965.5px;top:200px;font-size:10.8px">19–25</div>
<div class="g" style="left:1015.5px;width:70px;text-align:center;top:200px;font-size:10.8px">26–3</div>
<div class="g" style="left:1085.5px;width:70px;text-align:center;top:200px;font-size:10.8px">4–10</div>
<div class="g" style="left:1155.5px;width:70px;text-align:center;top:200px;font-size:10.8px">11–17</div>
<div class="g" style="left:1225.5px;width:70px;text-align:center;top:200px;font-size:10.8px">18–24</div>
<div class="g" style="left:1295.5px;width:70px;text-align:center;top:200px;font-size:10.8px">25–31</div>
<div class="g" style="left:1365.5px;width:70px;text-align:center;top:200px;font-size:10.8px">1–7</div>
<div class="g" style="left:1435.5px;width:70px;text-align:center;top:200px;font-size:10.8px">8–14</div>
<div class="g" style="left:1505.5px;width:70px;text-align:center;top:200px;font-size:10.8px">15–21</div>
<div class="g" style="left:1575.5px;width:70px;text-align:center;top:200px;font-size:10.8px">22–28</div>
<div class="g" style="left:1645.5px;width:70px;text-align:center;top:200px;font-size:10.8px">29–5</div>
<div class="g" style="left:1715.5px;width:70px;text-align:center;top:200px;font-size:10.8px">6–12</div>
<div class="g" style="left:1785.5px;width:70px;text-align:center;top:200px;font-size:10.8px">13–19</div>
<div class="g" style="left:1855.5px;width:70px;text-align:center;top:200px;font-size:10.8px">20–26</div>
<div class="a" style="left:1386px;top:213px;width:1px;height:867px;background:#c22e48;box-shadow:0 0 0 .5px rgba(210,80,100,.25)"></div>
<svg style="left:975px;top:220.5px" width="12" height="9.5" viewBox="0 0 13 10" preserveAspectRatio="none" fill="none" stroke="#16181f" stroke-width="1.15" stroke-linejoin="round"><path d="M.7 1.7A1 1 0 0 1 1.7.7h2.6l1.2 1.4h5.8a1 1 0 0 1 1 1v5.2a1 1 0 0 1-1 1H1.7a1 1 0 0 1-1-1z"/></svg>
<div class="g" style="left:989.5px;top:219.5px;font-weight:bold;letter-spacing:0.265px">Go-To-Market</div>
<svg style="left:0;top:0" width="1920" height="1080" viewBox="0 0 1920 1080" fill="#fff" stroke="#2b3350" stroke-width="1" stroke-linejoin="round"><path d="M965 232.5H1394.5q2 0 2 2V238L1391.5 234.5H965"/></svg>
<svg style="left:975px;top:252.5px" width="12" height="9.5" viewBox="0 0 13 10" preserveAspectRatio="none" fill="none" stroke="#16181f" stroke-width="1.15" stroke-linejoin="round"><path d="M.7 1.7A1 1 0 0 1 1.7.7h2.6l1.2 1.4h5.8a1 1 0 0 1 1 1v5.2a1 1 0 0 1-1 1H1.7a1 1 0 0 1-1-1z"/></svg>
<div class="g" style="left:989.5px;top:251.5px;font-weight:bold;letter-spacing:-0.017px">Step 2: Launch a Campaign</div>
<svg style="left:0;top:0" width="1920" height="1080" viewBox="0 0 1920 1080" fill="#fff" stroke="#2b3350" stroke-width="1" stroke-linejoin="round"><path d="M965 264.5H1394.5q2 0 2 2V270L1391.5 266.5H965"/></svg>
<svg style="left:975px;top:284.5px" width="12" height="9.5" viewBox="0 0 13 10" preserveAspectRatio="none" fill="none" stroke="#16181f" stroke-width="1.15" stroke-linejoin="round"><path d="M.7 1.7A1 1 0 0 1 1.7.7h2.6l1.2 1.4h5.8a1 1 0 0 1 1 1v5.2a1 1 0 0 1-1 1H1.7a1 1 0 0 1-1-1z"/></svg>
<div class="g" style="left:989.5px;top:283.5px;font-weight:bold;letter-spacing:0.045px">01. Go-To Market Campaigns</div>
<svg style="left:0;top:0" width="1920" height="1080" viewBox="0 0 1920 1080" fill="#fff" stroke="#2b3350" stroke-width="1" stroke-linejoin="round"><path d="M965 296.5H1394.5q2 0 2 2V302L1391.5 298.5H965"/></svg>
<svg style="left:976.5px;top:315px" width="10" height="12" viewBox="0 0 10 12" fill="none" stroke="#1c1f2b" stroke-width="1.1" stroke-linejoin="round"><rect x=".7" y="1.5" width="8.6" height="9.8" rx="1.2"/><rect x="3" y=".5" width="4" height="2" rx=".6" fill="#fff"/><path d="M2.8 5.3h4.4M2.8 7.8h4.4"/></svg>
<div class="g" style="left:989.5px;top:315.5px;font-weight:bold;letter-spacing:0.025px">Perform Customer Research and Market Analysis</div>
<svg style="left:0;top:0" width="1920" height="1080" viewBox="0 0 1920 1080" fill="#fdf0b8" stroke="#e2ae1a" stroke-width="1" stroke-linejoin="round"><path d="M965 328.5H1394.5q2 0 2 2V334L1391.5 330.5H965"/></svg>
<svg style="left:975px;top:924.5px" width="12" height="9.5" viewBox="0 0 13 10" preserveAspectRatio="none" fill="none" stroke="#16181f" stroke-width="1.15" stroke-linejoin="round"><path d="M.7 1.7A1 1 0 0 1 1.7.7h2.6l1.2 1.4h5.8a1 1 0 0 1 1 1v5.2a1 1 0 0 1-1 1H1.7a1 1 0 0 1-1-1z"/></svg>
<div class="g" style="left:989.5px;top:923.5px;font-weight:bold;letter-spacing:0.015px">Step 3: See a Pro example</div>
<svg style="left:0;top:0" width="1920" height="1080" viewBox="0 0 1920 1080" fill="#fff" stroke="#2b3350" stroke-width="1" stroke-linejoin="round"><path d="M965 936.5H1394.5q2 0 2 2V942L1391.5 938.5H965"/></svg>
<svg style="left:976.5px;top:955px" width="10" height="12" viewBox="0 0 10 12" fill="none" stroke="#1c1f2b" stroke-width="1.1" stroke-linejoin="round"><rect x=".7" y="1.5" width="8.6" height="9.8" rx="1.2"/><rect x="3" y=".5" width="4" height="2" rx=".6" fill="#fff"/><path d="M2.8 5.3h4.4M2.8 7.8h4.4"/></svg>
<div class="g" style="left:989.5px;top:955.5px;font-weight:bold;letter-spacing:-0.008px">Website Launch</div>
<svg style="left:0;top:0" width="1920" height="1080" viewBox="0 0 1920 1080" fill="#fbd9a8" stroke="#dd7a1c" stroke-width="1" stroke-linejoin="round"><path d="M965 968.5H1394.5q2 0 2 2V974L1391.5 970.5H965"/></svg>
<svg style="left:967.8px;top:351px" width="9" height="9" viewBox="0 0 9 9" fill="#4a5272"><path d="M8.5.3v8.4L.3 4.5z"/></svg>
<svg style="left:967.8px;top:383px" width="9" height="9" viewBox="0 0 9 9" fill="#4a5272"><path d="M8.5.3v8.4L.3 4.5z"/></svg>
<svg style="left:967.8px;top:415px" width="9" height="9" viewBox="0 0 9 9" fill="#4a5272"><path d="M8.5.3v8.4L.3 4.5z"/></svg>
<svg style="left:967.8px;top:447px" width="9" height="9" viewBox="0 0 9 9" fill="#4a5272"><path d="M8.5.3v8.4L.3 4.5z"/></svg>
<svg style="left:967.8px;top:991px" width="9" height="9" viewBox="0 0 9 9" fill="#4a5272"><path d="M8.5.3v8.4L.3 4.5z"/></svg>
<svg style="left:967.8px;top:1023px" width="9" height="9" viewBox="0 0 9 9" fill="#4a5272"><path d="M8.5.3v8.4L.3 4.5z"/></svg>
<svg style="left:967.8px;top:1055px" width="9" height="9" viewBox="0 0 9 9" fill="#4a5272"><path d="M8.5.3v8.4L.3 4.5z"/></svg>
<div class="a" style="left:964px;top:476px;width:40px;height:18px;overflow:hidden"><div class="g" style="left:-.400px;top:2px;letter-spacing:.1px">nt</div></div>
<div class="a" style="left:964px;top:508px;width:40px;height:18px;overflow:hidden"><div class="g" style="left:-4.8px;top:2px;letter-spacing:.2px">sa S.</div></div>
<svg style="left:1383px;top:538.3px" width="18" height="18" viewBox="0 0 18 18"><path d="M9 1.6 16.4 9 9 16.4 1.6 9z" fill="#e0203f" stroke="#e0203f" stroke-width="1.6" stroke-linejoin="round"/></svg>
<div class="g" style="left:1405.5px;top:542px;letter-spacing:0.033px">External Communication</div>
<svg style="left:1366.5px;top:572.1px" width="12" height="9.5" viewBox="0 0 13 10" preserveAspectRatio="none" fill="none" stroke="#16181f" stroke-width="1.15" stroke-linejoin="round"><path d="M.7 1.7A1 1 0 0 1 1.7.7h2.6l1.2 1.4h5.8a1 1 0 0 1 1 1v5.2a1 1 0 0 1-1 1H1.7a1 1 0 0 1-1-1z"/></svg>
<div class="g" style="left:1381.4px;top:572px;font-weight:bold;letter-spacing:-0.005px">Step 1: Quick Start Guide</div>
<svg style="left:0;top:0" width="1920" height="1080" viewBox="0 0 1920 1080" fill="#fff" stroke="#2b3350" stroke-width="1" stroke-linejoin="round"><path d="M1366.5 586.5q0-2 2-2H1395q2 0 2 2v4l-4.5-4h-21.5l-4.5 4z"/></svg>
<svg style="left:0;top:0" width="1920" height="1080" viewBox="0 0 1920 1080"><path d="M1366 606q0-2 2-2H1395q2 0 2 2V623.5L1391.5 619H1371.5L1366 623.5z" fill="#e0203f"/><path d="M1366.5 623V653.5H1396.5V623" fill="none" stroke="#b02a42" stroke-width="1" stroke-dasharray="2 2"/></svg>
<div class="g" style="left:1402.5px;top:606px;letter-spacing:0.06px">External Communication</div>
<svg style="left:1366px;top:637px" width="10" height="11" viewBox="0 0 10 11" fill="none" stroke="#3a4260" stroke-width="1.1"><rect x=".6" y="1.7" width="8.8" height="8.7" rx="1.5"/><path d="M.6 3.2a1.5 1.5 0 0 1 1.5-1.5h5.8a1.5 1.5 0 0 1 1.5 1.5v.8H.6z" fill="#3a4260"/><path d="M2.8.4v1.3M7.2.4v1.3" stroke-linecap="round"/></svg>
<div class="g gm" style="left:1381.4px;top:638px;letter-spacing:0.04px">Review with Digital Team</div>
<svg style="left:1366px;top:669px" width="10" height="11" viewBox="0 0 10 11" fill="none" stroke="#3a4260" stroke-width="1.1"><rect x=".6" y="1.7" width="8.8" height="8.7" rx="1.5"/><path d="M.6 3.2a1.5 1.5 0 0 1 1.5-1.5h5.8a1.5 1.5 0 0 1 1.5 1.5v.8H.6z" fill="#3a4260"/><path d="M2.8.4v1.3M7.2.4v1.3" stroke-linecap="round"/></svg>
<svg style="left:1381.5px;top:667.5px" width="16" height="16" viewBox="0 0 18 18"><path d="M.8 6.2C.8 3 4.2 1.3 9 1.3s8.2 1.7 8.2 4.9v1.6c0 .5-.4.8-.9.8h-2.6c-.5 0-.8-.3-.8-.8V6.3H5.1v1.5c0 .5-.3.8-.8.8H1.7c-.5 0-.9-.3-.9-.8z" fill="#c41f2e"/><path d="M4.6 6.8h8.8l2.4 8.3c.2.8-.3 1.5-1.1 1.5H3.3c-.8 0-1.3-.7-1.1-1.5z" fill="#e2303c"/><rect x="5.4" y="8.3" width="7.2" height="6.6" rx=".8" fill="#f7dedb"/><path d="M7.8 8.3v6.6M10.2 8.3v6.6M5.4 10.5h7.2M5.4 12.7h7.2" stroke="#c93a44" stroke-width=".7"/></svg>
<div class="g gm" style="left:1402px;top:670px;letter-spacing:0.119px">Speak with a Marketing specialist if you want to learn more. <span style="font-size:9.5px;position:relative;top:-1px">•</span> Julia H.</div>
<svg style="left:1366px;top:701px" width="10" height="11" viewBox="0 0 10 11" fill="none" stroke="#3a4260" stroke-width="1.1"><rect x=".6" y="1.7" width="8.8" height="8.7" rx="1.5"/><path d="M.6 3.2a1.5 1.5 0 0 1 1.5-1.5h5.8a1.5 1.5 0 0 1 1.5 1.5v.8H.6z" fill="#3a4260"/><path d="M2.8.4v1.3M7.2.4v1.3" stroke-linecap="round"/></svg>
<svg style="left:1381.5px;top:699.5px" width="16" height="16" viewBox="0 0 18 18"><path d="M11.5 3c.5 3.6 1.8 5 5.5 5.7-3.7.7-5 2.1-5.5 5.7-.5-3.6-1.8-5-5.5-5.7C9.7 8 11 6.6 11.5 3z" fill="#f8cf4e"/><path d="M5.2 1.2c.3 1.8.9 2.5 2.7 2.8-1.8.3-2.4 1-2.7 2.8-.3-1.8-.9-2.5-2.7-2.8 1.8-.3 2.4-1 2.7-2.8zM5.5 11.5c.3 1.8.9 2.5 2.7 2.8-1.8.3-2.4 1-2.7 2.8-.3-1.8-.9-2.5-2.7-2.8 1.8-.3 2.4-1 2.7-2.8z" fill="#fbe59a"/></svg>
<div class="g gm" style="left:1402px;top:702px;letter-spacing:0.103px">Detailed instructions on how to use this template are here (10 min read) <span style="font-size:9.5px;position:relative;top:-1px">•</span> Lisa S.</div>
<svg style="left:1015px;top:731.5px" width="16" height="16" viewBox="0 0 18 18"><path d="M11.5 3c.5 3.6 1.8 5 5.5 5.7-3.7.7-5 2.1-5.5 5.7-.5-3.6-1.8-5-5.5-5.7C9.7 8 11 6.6 11.5 3z" fill="#f8cf4e"/><path d="M5.2 1.2c.3 1.8.9 2.5 2.7 2.8-1.8.3-2.4 1-2.7 2.8-.3-1.8-.9-2.5-2.7-2.8 1.8-.3 2.4-1 2.7-2.8zM5.5 11.5c.3 1.8.9 2.5 2.7 2.8-1.8.3-2.4 1-2.7 2.8-.3-1.8-.9-2.5-2.7-2.8 1.8-.3 2.4-1 2.7-2.8z" fill="#fbe59a"/></svg>
<div class="g gm" style="left:1032px;top:734px;letter-spacing:0.167px">This is an item. It can be configured to reflect the structure of a campaign, creative, or even a post...Drag it to the &quot;Tried it&quot; to show it's done. <span style="font-size:9.5px;position:relative;top:-1px">•</span> Jason M.</div>
<svg style="left:1897px;top:733px" width="10" height="11" viewBox="0 0 10 11" fill="none" stroke="#3a4260" stroke-width="1.1"><rect x=".6" y="1.7" width="8.8" height="8.7" rx="1.5"/><path d="M.6 3.2a1.5 1.5 0 0 1 1.5-1.5h5.8a1.5 1.5 0 0 1 1.5 1.5v.8H.6z" fill="#3a4260"/><path d="M2.8.4v1.3M7.2.4v1.3" stroke-linecap="round"/></svg>
<svg style="left:1248.5px;top:763.5px" width="16" height="16" viewBox="0 0 18 18"><ellipse cx="7.2" cy="11" rx="6.6" ry="6.3" fill="#c8283a"/><ellipse cx="7.2" cy="11" rx="4.7" ry="4.4" fill="#f3e3e3"/><ellipse cx="7.2" cy="11" rx="3.1" ry="2.9" fill="#c8283a"/><ellipse cx="7.2" cy="11" rx="1.3" ry="1.2" fill="#f3e3e3"/><path d="M7.4 10.8 14 4.2" stroke="#7b8791" stroke-width="1.2"/><path d="M13 2.2l1.2 1.9 2.7.5-2.1 2-2.3-.4-.4-2.2z" fill="#4aa3b8"/></svg>
<div class="g gm" style="left:1269px;top:766px;letter-spacing:0.147px">See all your to-dos in one place and get them done with our personal productivity board. Try it now. <span style="font-size:9.5px;position:relative;top:-1px">•</span> David M.</div>
<svg style="left:1897px;top:765px" width="10" height="11" viewBox="0 0 10 11" fill="none" stroke="#3a4260" stroke-width="1.1"><rect x=".6" y="1.7" width="8.8" height="8.7" rx="1.5"/><path d="M.6 3.2a1.5 1.5 0 0 1 1.5-1.5h5.8a1.5 1.5 0 0 1 1.5 1.5v.8H.6z" fill="#3a4260"/><path d="M2.8.4v1.3M7.2.4v1.3" stroke-linecap="round"/></svg>
<svg style="left:1281.5px;top:795.5px" width="16" height="16" viewBox="0 0 18 18"><path d="M1.2 3.8 15.6 1.5l1.2 12.3L2.3 16.7z" fill="#6f757f"/><path d="M2.9 4.9 16.9 2.6l-.1 11.2L2.3 16.7z" fill="#a9aeb6"/><path d="M4.5 6 15.8 4.2l-.1 8.6L4 15z" fill="#b9bdc4"/></svg>
<div class="g gm" style="left:1299px;top:798px;letter-spacing:0.099px">Stay in scope and never miss a deadline. Set realistic delivery dates with our Gantt. Try it now. <span style="font-size:9.5px;position:relative;top:-1px">•</span> Jason M.</div>
<svg style="left:1897px;top:797px" width="10" height="11" viewBox="0 0 10 11" fill="none" stroke="#3a4260" stroke-width="1.1"><rect x=".6" y="1.7" width="8.8" height="8.7" rx="1.5"/><path d="M.6 3.2a1.5 1.5 0 0 1 1.5-1.5h5.8a1.5 1.5 0 0 1 1.5 1.5v.8H.6z" fill="#3a4260"/><path d="M2.8.4v1.3M7.2.4v1.3" stroke-linecap="round"/></svg>
<svg style="left:1216.5px;top:827.5px" width="16" height="16" viewBox="0 0 18 18"><rect x="1.2" y="1.2" width="15.6" height="15.6" rx="1.2" fill="#e6e8ee"/><path d="M1.2 6.4h15.6M1.2 11.6h15.6M6.4 1.2v15.6M11.6 1.2v15.6" stroke="#d2d6de" stroke-width=".7"/><path d="M2.4 14.8 6.6 11l2.6 1.5L15.2 2.8" fill="none" stroke="#cf2f3f" stroke-width="1.9" stroke-linejoin="round" stroke-linecap="round"/></svg>
<div class="g gm" style="left:1235.5px;top:830px;letter-spacing:0.123px">Get your campaigns to market faster. Track progress with custom views created just for you. Try it now. <span style="font-size:9.5px;position:relative;top:-1px">•</span> Brandon R.</div>
<svg style="left:1897px;top:829px" width="10" height="11" viewBox="0 0 10 11" fill="none" stroke="#3a4260" stroke-width="1.1"><rect x=".6" y="1.7" width="8.8" height="8.7" rx="1.5"/><path d="M.6 3.2a1.5 1.5 0 0 1 1.5-1.5h5.8a1.5 1.5 0 0 1 1.5 1.5v.8H.6z" fill="#3a4260"/><path d="M2.8.4v1.3M7.2.4v1.3" stroke-linecap="round"/></svg>
<svg style="left:1285.5px;top:859.5px" width="16" height="16" viewBox="0 0 18 18"><rect x="1.5" y="1.2" width="13.5" height="15.6" rx="1" fill="#e6e8ee"/><path d="M3.6 4.4h8.6M3.6 7.2h8.6M3.6 10h5.4" stroke="#c0c5cf" stroke-width=".9"/><path d="M15.4 6.6 8.6 13.4l-2 3 3.2-1.8 6.8-6.8z" fill="#f0b73a"/><path d="M15.4 6.6l1.2 1.2.6-.8-1.1-1.1z" fill="#e2656f"/><path d="M6.6 16.4l1.1-1.7.7.7z" fill="#3a3a3a"/></svg>
<div class="g gm" style="left:1308px;top:862px;letter-spacing:0.159px">Launch effective campaigns in seconds. Get details up front with our prebuilt form. Try it now. <span style="font-size:9.5px;position:relative;top:-1px">•</span> Amy W.</div>
<svg style="left:1897px;top:861px" width="10" height="11" viewBox="0 0 10 11" fill="none" stroke="#3a4260" stroke-width="1.1"><rect x=".6" y="1.7" width="8.8" height="8.7" rx="1.5"/><path d="M.6 3.2a1.5 1.5 0 0 1 1.5-1.5h5.8a1.5 1.5 0 0 1 1.5 1.5v.8H.6z" fill="#3a4260"/><path d="M2.8.4v1.3M7.2.4v1.3" stroke-linecap="round"/></svg>
<svg style="left:1258.5px;top:891.5px" width="16" height="16" viewBox="0 0 18 18"><path d="M1.6 16.4 12.4 5.6" stroke="#474c58" stroke-width="2" stroke-linecap="round"/><path d="M11.2 6.8 12.4 5.6" stroke="#cfd2d9" stroke-width="2" stroke-linecap="round"/><path d="M14.4.8l.5 1.6 1.6.5-1.6.5-.5 1.6-.5-1.6-1.6-.5 1.6-.5zM10.4 1.3l.3.9.9.3-.9.3-.3.9-.3-.9-.9-.3.9-.3zM16 6.2l.3.9.9.3-.9.3-.3.9-.3-.9-.9-.3.9-.3z" fill="#f0c552"/></svg>
<div class="g gm" style="left:1275.5px;top:894px;letter-spacing:0.081px">Stay creative with seamless review and approval process. Track all changes in one place. Try it now. <span style="font-size:9.5px;position:relative;top:-1px">•</span> Julia H.</div>
<svg style="left:1897px;top:893px" width="10" height="11" viewBox="0 0 10 11" fill="none" stroke="#3a4260" stroke-width="1.1"><rect x=".6" y="1.7" width="8.8" height="8.7" rx="1.5"/><path d="M.6 3.2a1.5 1.5 0 0 1 1.5-1.5h5.8a1.5 1.5 0 0 1 1.5 1.5v.8H.6z" fill="#3a4260"/><path d="M2.8.4v1.3M7.2.4v1.3" stroke-linecap="round"/></svg>
<div class="a" style="left:1766px;top:229px;width:82px;height:24px;border-radius:6px;background:#f0f3f8"></div>
<div class="g" style="left:1774.3px;top:235px;letter-spacing:0.035px">Months</div>
<svg style="left:1827.5px;top:238.5px" width="9" height="6" viewBox="0 0 9 6" fill="none" stroke="#1c1f2b" stroke-width="1.3" stroke-linecap="round" stroke-linejoin="round"><path d="M1 1 4.5 4.5 8 1"/></svg>
<div class="a" style="left:1852px;top:229px;width:24px;height:24px;border-radius:6px;background:#f0f3f8"></div>
<div class="a" style="left:1858px;top:240px;width:12px;height:2px;background:#14161c"></div>
<div class="a" style="left:1880px;top:229px;width:24px;height:24px;border-radius:6px;background:#f0f3f8"></div>
<div class="a" style="left:1886px;top:240px;width:12px;height:2px;background:#14161c"></div>
<div class="a" style="left:1891px;top:235px;width:2px;height:12px;background:#14161c"></div>
<div class="a" style="left:965px;top:631px;width:12px;height:32px;border-radius:0 5px 5px 0;background:#8d9ab8"></div>
<svg style="left:968.5px;top:642.7px" width="5" height="9" viewBox="0 0 5 9" fill="none" stroke="#fff" stroke-width="1.2" stroke-linecap="round" stroke-linejoin="round"><path d="M4 .8 1 4.5l3 3.7"/></svg>
<svg style="left:1084px;top:507px" width="12" height="18" viewBox="0 0 12 18"><path d="M1 1v13.2l3.1-3 2.3 5.3 2-.9-2.3-5.2H10.5z" fill="#111" stroke="#fff" stroke-width="1" stroke-linejoin="round"/></svg>
</body></html>
